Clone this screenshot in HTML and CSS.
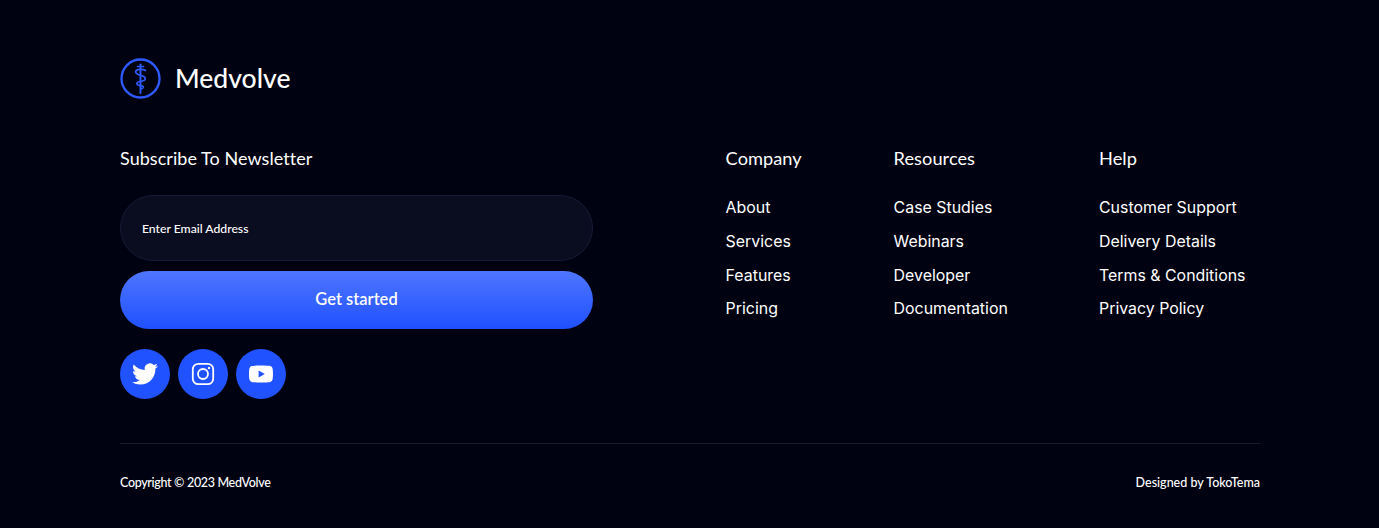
FILE: index.html
```html
<!DOCTYPE html>
<html lang="en">
<head>
<meta charset="utf-8">
<title>Medvolve</title>
<link rel="stylesheet" href="styles.css">
</head>
<body>
<footer class="footer">
  <div class="brand">
    <svg class="brand-mark" width="41" height="41" viewBox="0 0 41 41" fill="none" stroke="#2d5bff" stroke-linecap="round">
      <circle cx="20.5" cy="20.5" r="19" stroke-width="2.3"/>
      <path d="M20.5 6.5V35" stroke-width="1.9"/>
      <path d="M17.5 8.5h6" stroke-width="1.7"/>
      <path d="M25.5 12.5c-2-1.4-9.5-1.8-9.8 1.2-.3 2.8 4 3.4 6.2 4 2.4.7 3.6 1.6 3.3 3.2-.4 2-3.4 2.4-5 2.6-1.6.3-3.4.9-3.3 2.3.1 1.3 1.7 1.7 3.3 1.8 1.5.1 3.2.4 3.1 1.6-.1 1-1.2 1.4-2.4 1.6" stroke-width="1.7"/>
    </svg>
    <span class="brand-name">Medvolve</span>
  </div>
  <div class="main">
    <section class="subscribe">
      <h3 class="heading">Subscribe To Newsletter</h3>
      <form class="form">
        <div class="email">Enter Email Address</div>
        <div class="cta">Get started</div>
      </form>
      <div class="socials">
        <a class="social"><svg width="26" height="26" viewBox="0 0 24 24" fill="#fff"><path d="M23.95 4.57a10 10 0 0 1-2.82.77 4.96 4.96 0 0 0 2.16-2.72c-.95.55-2 .95-3.12 1.18a4.92 4.92 0 0 0-8.38 4.48C7.69 8.1 4.07 6.13 1.64 3.16a4.82 4.82 0 0 0-.67 2.48c0 1.71.87 3.21 2.19 4.1a4.9 4.9 0 0 1-2.23-.62v.06a4.92 4.92 0 0 0 3.95 4.83 5 5 0 0 1-2.21.08 4.94 4.94 0 0 0 4.6 3.42A9.87 9.87 0 0 1 0 19.54a14 14 0 0 0 7.56 2.21c9.05 0 14-7.5 14-13.98 0-.21 0-.42-.02-.63a9.94 9.94 0 0 0 2.41-2.57z"/></svg></a>
        <a class="social"><svg width="24" height="24" viewBox="0 0 24 24" fill="none" stroke="#fff" stroke-width="1.8"><rect x="1.8" y="1.8" width="20.4" height="20.4" rx="5.5"/><circle cx="12" cy="12" r="5"/><circle cx="18" cy="6" r="1.2" fill="#fff" stroke="none"/></svg></a>
        <a class="social"><svg width="24" height="24" viewBox="0 0 24 24" fill="#fff"><path d="M23.5 6.2a3 3 0 0 0-2.1-2.1C19.5 3.55 12 3.55 12 3.55s-7.5 0-9.4.55A3 3 0 0 0 .5 6.2C0 8.1 0 12 0 12s0 3.9.5 5.8a3 3 0 0 0 2.1 2.1c1.9.55 9.4.55 9.4.55s7.5 0 9.4-.55a3 3 0 0 0 2.1-2.1c.5-1.9.5-5.8.5-5.8s0-3.9-.5-5.8zM9.6 15.6V8.4l6.2 3.6z"/></svg></a>
      </div>
    </section>
    <nav class="links">
      <div class="col col-company">
        <h3 class="heading heading-col">Company</h3>
        <ul class="list"><li>About</li><li>Services</li><li>Features</li><li>Pricing</li></ul>
      </div>
      <div class="col col-resources">
        <h3 class="heading heading-col">Resources</h3>
        <ul class="list"><li>Case Studies</li><li>Webinars</li><li>Developer</li><li>Documentation</li></ul>
      </div>
      <div class="col col-help">
        <h3 class="heading heading-col">Help</h3>
        <ul class="list"><li>Customer Support</li><li>Delivery Details</li><li>Terms &amp; Conditions</li><li>Privacy Policy</li></ul>
      </div>
    </nav>
  </div>
  <div class="bottom">
    <span class="copyright">Copyright © 2023 MedVolve</span>
    <span>Designed by TokoTema</span>
  </div>
</footer>
</body>
</html>
```

FILE: styles.css
```css
* { box-sizing: border-box; }
html, body { margin: 0; background: #000212; }
body { color: #fff; font-family: "Lato", "Noto Sans", sans-serif; }
.footer { width: 1379px; height: 528px; padding: 58px 119px 0 120px; overflow: hidden; }
.brand { display: flex; align-items: center; gap: 14px; height: 41px; }
.brand-mark { display: block; }
.brand-name { font-size: 26.5px; font-weight: 500; line-height: 41px; }
.main { display: flex; margin-top: 48px; }
.subscribe { width: 606px; }
.heading { margin: 0; font-size: 18px; font-weight: 400; line-height: 22px; letter-spacing: .05px; }
.heading-col { font-size: 18.2px; }
.form { width: 473px; margin-top: 26px; display: flex; flex-direction: column; gap: 10px; }
.email { height: 66px; border: 1px solid #171b36; border-radius: 33px; background: #0a0c1f; padding-left: 21px; font-size: 12.2px; font-weight: 500; line-height: 65px; }
.cta { height: 58px; border-radius: 29px; background: linear-gradient(180deg, #4f76ff 0%, #1f50ff 100%); text-align: center; font-size: 16.5px; font-weight: 600; line-height: 56px; }
.socials { display: flex; gap: 8px; margin-top: 20px; }
.social { width: 50px; height: 50px; border-radius: 50%; background: #2152ff; display: flex; align-items: center; justify-content: center; }
.links { display: flex; margin-left: -.4px; }
.col-company { width: 168px; }
.col-resources { width: 205.4px; }
.list { list-style: none; margin: 22.3px 0 0; padding: 0; font-family: "Inter", "Lato", sans-serif; font-size: 15.9px; line-height: 33.7px; }
.bottom { display: flex; justify-content: space-between; margin-top: 44px; padding-top: 28px; border-top: 1px solid #1a1c2c; font-size: 12.5px; font-weight: 500; line-height: 22px; }
.copyright { letter-spacing: -.33px; }
```
